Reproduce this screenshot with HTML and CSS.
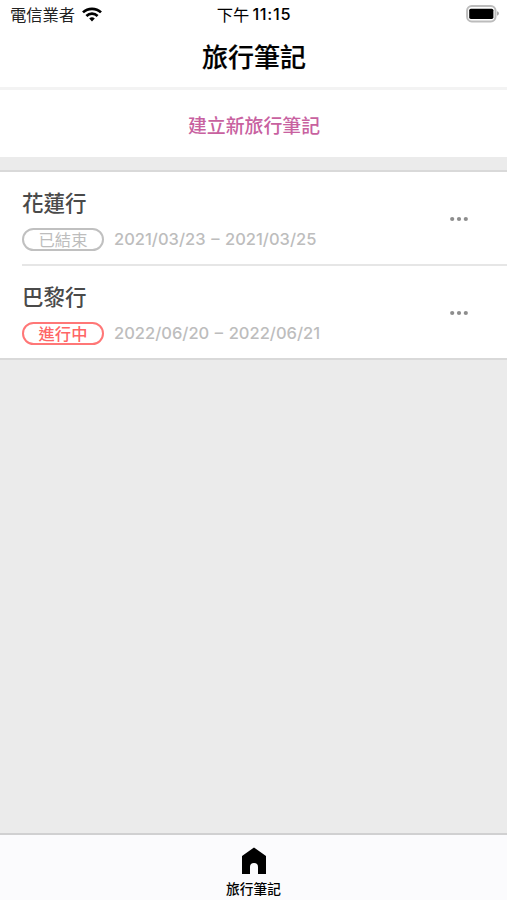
FILE: index.html
```html
<!DOCTYPE html>
<html lang="zh-Hant">
<head>
<meta charset="utf-8">
<title>旅行筆記</title>
<link rel="stylesheet" href="styles.css">
</head>
<body>
<header class="header">
  <div class="status">
    <div class="carrier"><span class="carrier-name">電信業者</span>
      <svg class="wifi" width="20" height="15" viewBox="0 0 20 15"><g fill="none" stroke="#000" stroke-width="2.7"><path d="M1 5.4C6 .6 14 .6 19 5.4"/><path d="M4.4 8.9C7.6 5.9 12.4 5.9 15.6 8.9"/></g><path d="M7.2 11.5Q10 9.2 12.8 11.5L10 14.5Z"/></svg>
    </div>
    <div class="clock">下午<span class="time">11:15</span></div>
    <svg class="battery" width="34" height="18" viewBox="0 0 34 18"><rect x="1.1" y="1" width="28.4" height="15.4" rx="4.6" fill="#fff" stroke="#bcbcbc" stroke-width="2"/><rect x="3.2" y="3.7" width="24.2" height="10.2" rx="1.6"/><path d="M31 6.3q2 .6 2 2.2t-2 2.2z" fill="#aaa"/></svg>
  </div>
  <h1 class="title">旅行筆記</h1>
</header>
<main class="main">
  <button class="create">建立新旅行筆記</button>
  <ul class="list">
    <li class="trip">
      <div class="info">
        <h2 class="name">花蓮行</h2>
        <div class="meta"><span class="badge">已結束</span><span class="dates">2021/03/23 – 2021/03/25</span></div>
      </div>
      <svg class="more" width="18" height="6" viewBox="0 0 18 6"><circle cx="2.2" cy="3" r="2.1"/><circle cx="9" cy="3" r="2.1"/><circle cx="15.8" cy="3" r="2.1"/></svg>
    </li>
    <li class="trip">
      <div class="info">
        <h2 class="name">巴黎行</h2>
        <div class="meta"><span class="badge active">進行中</span><span class="dates">2022/06/20 – 2022/06/21</span></div>
      </div>
      <svg class="more" width="18" height="6" viewBox="0 0 18 6"><circle cx="2.2" cy="3" r="2.1"/><circle cx="9" cy="3" r="2.1"/><circle cx="15.8" cy="3" r="2.1"/></svg>
    </li>
  </ul>
</main>
<nav class="tabs">
  <svg class="home" width="26" height="28" viewBox="0 0 26 28"><path d="M13 .5 25 9V27H17V20a4 4 0 0 0-8 0V27H1V9Z"/></svg>
  <span class="tab-label">旅行筆記</span>
</nav>
</body>
</html>
```
FILE: styles.css
```css
* { box-sizing: border-box; }
body {
  margin: 0;
  height: 900px;
  display: flex;
  flex-direction: column;
  overflow: hidden;
  background: #ebebeb;
  color: #000;
  font-family: "Noto Sans CJK TC", sans-serif;
}
.header {
  height: 90px;
  background: #fff;
  border-bottom: 3px solid #f3f3f3;
}
.status {
  height: 29px;
  padding: 0 7px 0 10px;
  display: grid;
  grid-template-columns: 1fr auto 1fr;
  align-items: center;
  font-size: 16.3px;
  line-height: 29px;
}
.carrier { display: flex; align-items: center; gap: 7px; color: #222; }
.wifi { margin-top: -1px; }
.clock { display: flex; gap: 3px; margin-right: 2px; }
.time { font-family: Inter, sans-serif; font-weight: 500; letter-spacing: .7px; }
.battery { justify-self: end; margin-top: -1px; }
.title {
  margin: 0;
  padding-left: 1px;
  font-size: 26px;
  font-weight: 500;
  line-height: 54px;
  text-align: center;
  -webkit-text-stroke: .2px #000;
}
.main { flex: 1; }
.create {
  display: block;
  width: 100%;
  height: 67px;
  padding: 3px 0 0 1px;
  border: 0;
  background: #fff;
  color: #c8619f;
  font: 500 18.9px/30px "Noto Sans CJK TC", sans-serif;
}
.list {
  margin: 13px 0 0;
  padding: 0 0 0 22px;
  list-style: none;
  background: #fff;
  border-top: 2px solid #d9d9d9;
  border-bottom: 2px solid #d9d9d9;
}
.trip {
  height: 92px;
  padding: 13px 39px 0 0;
  display: flex;
  justify-content: space-between;
}
.trip + .trip { height: 94px; border-top: 2px solid #e6e6e6; }
.name {
  margin: 0;
  color: #4a4a4a;
  font-size: 21.5px;
  font-weight: 500;
  line-height: 34px;
}
.meta { display: flex; align-items: center; gap: 10px; margin-top: 9px; }
.badge {
  width: 82px;
  height: 23px;
  border: 2px solid #c0c0c0;
  border-radius: 12px;
  color: #bdbdbd;
  font-size: 16.3px;
  line-height: 18px;
  text-align: center;
}
.active { color: #f66; border-color: #f77; font-weight: 500; }
.dates {
  color: #bdbdbd;
  font: 500 16.5px/23px Inter, sans-serif;
  word-spacing: 1.2px;
}
.more { margin-top: 31px; fill: #8d8d8d; }
.tabs {
  height: 67px;
  display: flex;
  flex-direction: column;
  align-items: center;
  background: #fbfbfd;
  border-top: 2px solid #d0d0d1;
}
.home { margin-top: 12px; }
.tab-label { margin-top: 3px; font-size: 13.7px; font-weight: 500; line-height: 20px; }
```
